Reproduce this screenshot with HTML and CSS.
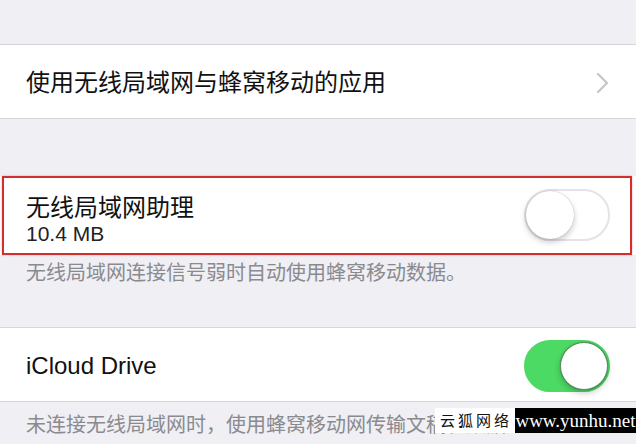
FILE: index.html
```html
<!DOCTYPE html>
<html lang="zh-CN">
<head>
    <meta charset="UTF-8">
    <meta name="viewport" content="width=device-width, initial-scale=1.0">
    <title>蜂窝移动网络</title>
    <link rel="stylesheet" href="styles.css">
</head>
<body>
    <div class="page">
        <div class="top-space"></div>

        <div class="group">
            <div class="row">
                <span class="label">使用无线局域网与蜂窝移动的应用</span>
                <svg class="chevron" width="14" height="22" viewBox="0 0 14 22">
                    <polyline points="2,2 11,11 2,20" fill="none" stroke="#c7c7cc" stroke-width="2.4" stroke-linecap="round" stroke-linejoin="round"/>
                </svg>
            </div>
        </div>

        <div class="group plain">
            <div class="row marked">
                <div class="text">
                    <span class="label">无线局域网助理</span>
                    <span class="sub">10.4 MB</span>
                </div>
                <div class="switch"><div class="knob"></div></div>
            </div>
        </div>
        <p class="note first">无线局域网连接信号弱时自动使用蜂窝移动数据。</p>

        <div class="group last">
            <div class="row">
                <span class="label">iCloud Drive</span>
                <div class="switch on"><div class="knob"></div></div>
            </div>
        </div>
        <p class="note">未连接无线局域网时，使用蜂窝移动网传输文稿和数据。</p>

        <div class="watermark">
            <span class="wm-name">云狐网络</span>
            <span class="wm-url">www.yunhu.net</span>
        </div>
    </div>
</body>
</html>
```

FILE: styles.css
```css
* {
    margin: 0;
    padding: 0;
    box-sizing: border-box;
}

body {
    font-family: "Liberation Sans", "Noto Sans CJK SC", sans-serif;
    background-color: #efeff4;
    color: #111;
}

.page {
    position: relative;
    width: 636px;
    height: 444px;
    overflow: hidden;
}

.top-space {
    height: 44px;
}

.group {
    background-color: white;
    border-top: 1px solid #d6d6da;
    border-bottom: 1px solid #d6d6da;
    margin-bottom: 57px;
}

.group.plain {
    border: none;
    margin-bottom: 0;
}

.group.last {
    margin-bottom: 0;
}

.row {
    height: 73px;
    display: flex;
    align-items: center;
    justify-content: space-between;
    padding: 2px 26px 0 26px;
}

.label {
    font-size: 24px;
    line-height: 28px;
}

.row.marked {
    height: 79px;
    margin: 0 4px 0 2px;
    padding: 16px 20px 8px 22px;
    border: 2px solid #cf2f2d;
    box-shadow: 0 0 2px rgba(207, 47, 45, 0.4);
    align-items: stretch;
}

.text {
    display: flex;
    flex-direction: column;
}

.sub {
    font-size: 21px;
    line-height: 24px;
    color: #222;
}

.marked .switch {
    align-self: center;
    margin-top: -9px;
}

.switch {
    width: 86px;
    height: 52px;
    border-radius: 26px;
    border: 2px solid #e4e4e8;
    background-color: white;
    position: relative;
}

.knob {
    position: absolute;
    top: 0;
    left: 0;
    width: 48px;
    height: 48px;
    border-radius: 50%;
    background-color: white;
    box-shadow: 0 3px 6px rgba(0, 0, 0, 0.22), 0 0 1px rgba(0, 0, 0, 0.3);
}

.switch.on {
    background-color: #4cd964;
    border-color: #4cd964;
}

.switch.on .knob {
    left: auto;
    right: 0;
    border: 1px solid #5a8a62;
}

.note {
    font-size: 20px;
    line-height: 28px;
    color: #8a8a8f;
    padding: 9px 26px 0;
    white-space: nowrap;
}

.note.first {
    height: 72px;
    padding-top: 4px;
}

.watermark {
    position: absolute;
    left: 435px;
    top: 408px;
    display: flex;
    height: 25px;
    white-space: nowrap;
}

.wm-name {
    background-color: white;
    color: #111;
    width: 80px;
    font-size: 15px;
    line-height: 25px;
    letter-spacing: 3px;
    padding-left: 5px;
}

.wm-url {
    background-color: black;
    color: white;
    width: 121px;
    font-family: "Liberation Serif", serif;
    font-size: 19px;
    line-height: 25px;
    text-align: center;
}
```
